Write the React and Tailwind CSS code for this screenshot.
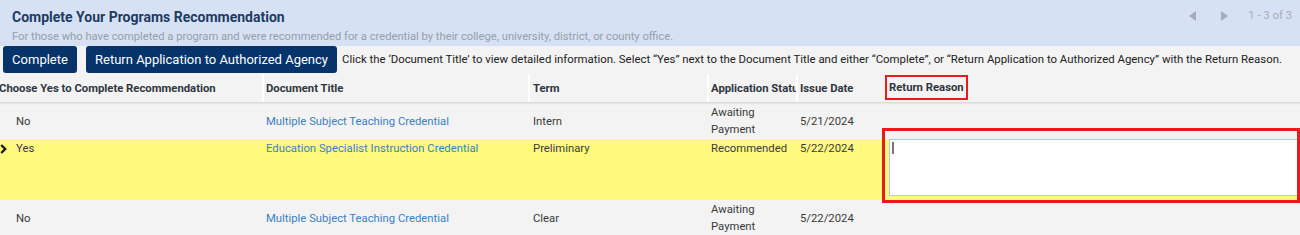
import React from 'react';

const rows = [
    { choose: 'No', title: 'Multiple Subject Teaching Credential', term: 'Intern', status: ['Awaiting', 'Payment'], date: '5/21/2024' },
    { choose: 'Yes', title: 'Education Specialist Instruction Credential', term: 'Preliminary', status: ['Recommended'], date: '5/22/2024', editing: true },
    { choose: 'No', title: 'Multiple Subject Teaching Credential', term: 'Clear', status: ['Awaiting', 'Payment'], date: '5/22/2024' },
];

const cols = 'grid grid-cols-[264px_266px_179px_89px_87px_1fr]';

const Chevron = () => (
    <svg width="7" height="10" viewBox="0 0 7 10" className="absolute left-[0px] top-[5px]">
        <path d="M1.2 1 L5.2 5 L1.2 9" fill="none" stroke="#1a1a1a" strokeWidth="2.4" />
    </svg>
);

const Row = ({ row }) => {
    if (row.editing) {
        return (
            <div className={`${cols} h-[61px] bg-[#fffa7d] items-start text-[11.3px] leading-[17px] text-[#3a3a3a]`}>
                <div className="relative pl-[16px] pt-[1px]">
                    <Chevron />
                    {row.choose}
                </div>
                <div className="pl-[2px] pt-[1px] text-[#3b7fc4]">{row.title}</div>
                <div className="pl-[3px] pt-[1px]">{row.term}</div>
                <div className="pl-[2px] pt-[1px]">{row.status.join(' ')}</div>
                <div className="pl-[2px] pt-[1px]">{row.date}</div>
                <div className="pl-[4px]">
                    <div className="relative h-[57px] bg-white border border-[#a9cbe9] border-b-[#b8cfc8]">
                        <span className="absolute left-[2px] top-[2px] w-[1.5px] h-[12px] bg-[#777]"></span>
                    </div>
                </div>
            </div>
        );
    }
    return (
        <div className={`${cols} h-[36px] items-center text-[11.3px] leading-[17px] text-[#3a3a3a]`}>
            <div className="pl-[16px]">{row.choose}</div>
            <div className="pl-[2px] text-[#3b7fc4]">{row.title}</div>
            <div className="pl-[3px]">{row.term}</div>
            <div className="pl-[2px]">
                {row.status.map((s) => (
                    <div key={s}>{s}</div>
                ))}
            </div>
            <div className="pl-[2px]">{row.date}</div>
            <div></div>
        </div>
    );
};

export default function App() {
    return (
        <div className="w-[1300px] h-[235px] overflow-hidden bg-[#f3f3f3] font-['Roboto',sans-serif]">
            {/* Header */}
            <div className="h-[46px] bg-[#d6e2f3] flex justify-between pl-[12px] pr-[8px] overflow-hidden">
                <div>
                    <h2 className="pt-[8px] text-[14px] leading-[18px] font-bold text-[#1d3b63]">Complete Your Programs Recommendation</h2>
                    <p className="mt-[3px] text-[11.2px] leading-[16px] text-[#939fab]">
                        For those who have completed a program and were recommended for a credential by their college, university, district, or county office.
                    </p>
                </div>
                <div className="flex items-center h-[32px] text-[11.3px] text-[#a5adb8]">
                    <svg width="8" height="10" viewBox="0 0 8 10" className="mr-[23px]">
                        <path d="M7 0 L0 5 L7 10 Z" fill="#a5adb8" />
                    </svg>
                    <svg width="8" height="10" viewBox="0 0 8 10" className="mr-[20px]">
                        <path d="M1 0 L8 5 L1 10 Z" fill="#a5adb8" />
                    </svg>
                    <span>1 - 3 of 3</span>
                </div>
            </div>

            {/* Toolbar */}
            <div className="h-[28px] flex items-start pl-[3px] gap-[9px]">
                <button className="h-[27px] w-[74px] bg-[#06346a] text-white text-[13px] rounded-[3px] whitespace-nowrap">Complete</button>
                <button className="h-[27px] w-[251px] bg-[#06346a] text-white text-[13px] rounded-[3px] whitespace-nowrap">Return Application to Authorized Agency</button>
                <span className="text-[11.4px] leading-[27px] text-[#222] -ml-[4px] whitespace-nowrap">
                    Click the ‘Document Title’ to view detailed information. Select “Yes” next to the Document Title and either “Complete”, or “Return Application to Authorized Agency” with the Return Reason.
                </span>
            </div>

            {/* Grid */}
            <div className="relative">
                <div className={`${cols} h-[29px] border-b border-[#dcdcdc] shadow-[0_1px_1px_rgba(0,0,0,0.05)] text-[11.3px] font-bold text-[#2f3640]`}>
                    <div className="border-r-2 border-white flex items-center pt-[2px] whitespace-nowrap overflow-hidden -indent-[1px]">Choose Yes to Complete Recommendation</div>
                    <div className="border-r-2 border-white flex items-center pt-[2px] pl-[2px]">Document Title</div>
                    <div className="border-r-2 border-white flex items-center pt-[2px] pl-[3px]">Term</div>
                    <div className="border-r-2 border-white flex items-center pt-[2px] pl-[2px] overflow-hidden">
                        <span className="whitespace-nowrap">Application Status</span>
                    </div>
                    <div className="flex items-center pt-[2px] pl-[2px]">Issue Date</div>
                    <div className="flex items-start pt-[1px]">
                        <span className="border-[2.5px] border-[#e51c1c] h-[25px] px-[2px] pt-[2px] flex items-center">Return Reason</span>
                    </div>
                </div>
                {rows.map((r, i) => (
                    <Row key={i} row={r} />
                ))}
                {/* annotation box round the textarea */}
                <div className="absolute left-[882px] top-[54px] w-[418px] h-[75px] border-[3px] border-[#e51c1c] pointer-events-none"></div>
            </div>
        </div>
    );
}
